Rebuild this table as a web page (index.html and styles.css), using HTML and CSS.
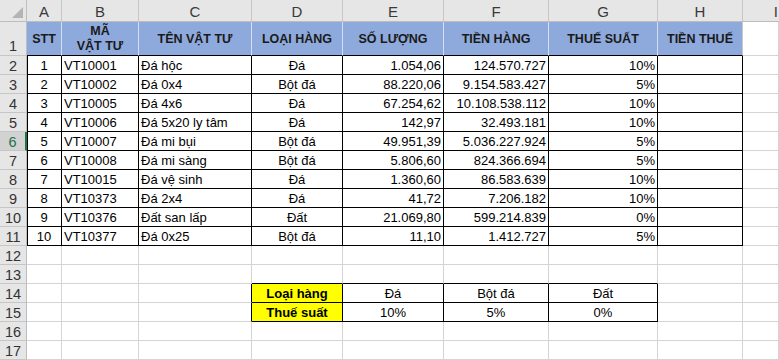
FILE: index.html
```html
<!DOCTYPE html>
<html lang="vi">
<head>
<meta charset="utf-8">
<title>Bảng vật tư</title>
<link rel="stylesheet" href="styles.css">
</head>
<body>
<div class="sheet">
  <!-- column headers -->
  <div class="corner"><span class="tri"></span></div>
  <div class="ch">A</div><div class="ch">B</div><div class="ch">C</div><div class="ch">D</div>
  <div class="ch">E</div><div class="ch">F</div><div class="ch">G</div><div class="ch">H</div><div class="ch edge">I</div>

  <!-- row 1 -->
  <div class="rh rh1">1</div>
  <div class="c hd">STT</div>
  <div class="c hd two">MÃ<br>VẬT TƯ</div>
  <div class="c hd">TÊN VẬT TƯ</div>
  <div class="c hd">LOẠI HÀNG</div>
  <div class="c hd">SỐ LƯỢNG</div>
  <div class="c hd">TIỀN HÀNG</div>
  <div class="c hd">THUẾ SUẤT</div>
  <div class="c hd last">TIỀN THUẾ</div>
  <div class="c"></div>

  <div class="rh">2</div>
  <div class="c d ctr first">1</div><div class="c d">VT10001</div><div class="c d">Đá hộc</div><div class="c d ctr">Đá</div><div class="c d r">1.054,06</div><div class="c d r">124.570.727</div><div class="c d r">10%</div><div class="c d"></div><div class="c"></div>

  <div class="rh">3</div>
  <div class="c d ctr first">2</div><div class="c d">VT10002</div><div class="c d">Đá 0x4</div><div class="c d ctr">Bột đá</div><div class="c d r">88.220,06</div><div class="c d r">9.154.583.427</div><div class="c d r">5%</div><div class="c d"></div><div class="c"></div>

  <div class="rh">4</div>
  <div class="c d ctr first">3</div><div class="c d">VT10005</div><div class="c d">Đá 4x6</div><div class="c d ctr">Đá</div><div class="c d r">67.254,62</div><div class="c d r">10.108.538.112</div><div class="c d r">10%</div><div class="c d"></div><div class="c"></div>

  <div class="rh">5</div>
  <div class="c d ctr first">4</div><div class="c d">VT10006</div><div class="c d">Đá 5x20 ly tâm</div><div class="c d ctr">Đá</div><div class="c d r">142,97</div><div class="c d r">32.493.181</div><div class="c d r">10%</div><div class="c d"></div><div class="c"></div>

  <div class="rh sel">6</div>
  <div class="c d ctr first">5</div><div class="c d">VT10007</div><div class="c d">Đá mi bụi</div><div class="c d ctr">Bột đá</div><div class="c d r">49.951,39</div><div class="c d r">5.036.227.924</div><div class="c d r">5%</div><div class="c d"></div><div class="c"></div>

  <div class="rh">7</div>
  <div class="c d ctr first">6</div><div class="c d">VT10008</div><div class="c d">Đá mi sàng</div><div class="c d ctr">Bột đá</div><div class="c d r">5.806,60</div><div class="c d r">824.366.694</div><div class="c d r">5%</div><div class="c d"></div><div class="c"></div>

  <div class="rh">8</div>
  <div class="c d ctr first">7</div><div class="c d">VT10015</div><div class="c d">Đá vệ sinh</div><div class="c d ctr">Đá</div><div class="c d r">1.360,60</div><div class="c d r">86.583.639</div><div class="c d r">10%</div><div class="c d"></div><div class="c"></div>

  <div class="rh">9</div>
  <div class="c d ctr first">8</div><div class="c d">VT10373</div><div class="c d">Đá 2x4</div><div class="c d ctr">Đá</div><div class="c d r">41,72</div><div class="c d r">7.206.182</div><div class="c d r">10%</div><div class="c d"></div><div class="c"></div>

  <div class="rh">10</div>
  <div class="c d ctr first">9</div><div class="c d">VT10376</div><div class="c d">Đất san lấp</div><div class="c d ctr">Đất</div><div class="c d r">21.069,80</div><div class="c d r">599.214.839</div><div class="c d r">0%</div><div class="c d"></div><div class="c"></div>

  <div class="rh">11</div>
  <div class="c d ctr first">10</div><div class="c d">VT10377</div><div class="c d">Đá 0x25</div><div class="c d ctr">Bột đá</div><div class="c d r">11,10</div><div class="c d r">1.412.727</div><div class="c d r">5%</div><div class="c d"></div><div class="c"></div>

  <div class="rh">12</div>
  <div class="c"></div><div class="c"></div><div class="c"></div><div class="c"></div><div class="c"></div><div class="c"></div><div class="c"></div><div class="c"></div><div class="c"></div>

  <div class="rh">13</div>
  <div class="c"></div><div class="c"></div><div class="c"></div><div class="c bb"></div><div class="c bb"></div><div class="c bb"></div><div class="c bb"></div><div class="c"></div><div class="c"></div>

  <div class="rh">14</div>
  <div class="c"></div><div class="c"></div><div class="c br"></div><div class="c y">Loại hàng</div><div class="c bx ctr">Đá</div><div class="c bx ctr">Bột đá</div><div class="c bx ctr">Đất</div><div class="c"></div><div class="c"></div>

  <div class="rh">15</div>
  <div class="c"></div><div class="c"></div><div class="c br"></div><div class="c y">Thuế suất</div><div class="c bx ctr">10%</div><div class="c bx ctr">5%</div><div class="c bx ctr">0%</div><div class="c"></div><div class="c"></div>

  <div class="rh">16</div>
  <div class="c"></div><div class="c"></div><div class="c"></div><div class="c"></div><div class="c"></div><div class="c"></div><div class="c"></div><div class="c"></div><div class="c"></div>

  <div class="rh">17</div>
  <div class="c"></div><div class="c"></div><div class="c"></div><div class="c"></div><div class="c"></div><div class="c"></div><div class="c"></div><div class="c"></div><div class="c"></div>
</div>
</body>
</html>
```

FILE: styles.css
```css
html, body {
  margin: 0;
  padding: 0;
  background: #ffffff;
  overflow: hidden;
}

.sheet {
  display: grid;
  grid-template-columns: 27px 35px 77px 113px 91px 101px 105px 109px 85px 36px;
  grid-template-rows: 22px 34px repeat(16, 19px);
  width: 779px;
  font-family: "Liberation Sans", Arial, sans-serif;
  font-size: 13px;
  color: #000;
}

.corner {
  position: relative;
  background: #e6e6e6;
  border-right: 1px solid #bdbdbd;
  border-bottom: 1px solid #bdbdbd;
  box-sizing: border-box;
}

.tri {
  position: absolute;
  right: 3px;
  bottom: 3px;
  width: 0;
  height: 0;
  border-left: 11px solid transparent;
  border-bottom: 11px solid #b4b4b4;
}

.ch {
  box-sizing: border-box;
  background: #e6e6e6;
  border-right: 1px solid #c6c6c6;
  border-bottom: 1px solid #bdbdbd;
  display: flex;
  align-items: center;
  justify-content: center;
  font-family: "Liberation Sans", Arial, sans-serif;
  font-size: 15px;
  color: #3a3a3a;
  padding-top: 1px;
}

.ch.edge {
  justify-content: flex-end;
  border-right: none;
  padding-right: 1px;
}

.rh {
  box-sizing: border-box;
  background: #e6e6e6;
  border-right: 1px solid #bdbdbd;
  border-bottom: 1px solid #c6c6c6;
  display: flex;
  align-items: center;
  justify-content: center;
  font-family: "Liberation Sans", Arial, sans-serif;
  font-size: 14.5px;
  color: #333333;
  padding-top: 1px;
}

.rh1 {
  align-items: flex-end;
  padding-bottom: 1px;
}

.rh.sel {
  background: #d2d2d2;
  color: #217346;
  border-right: 2px solid #217346;
}

.c {
  box-sizing: border-box;
  border-right: 1px solid #d4d4d4;
  border-bottom: 1px solid #d4d4d4;
  display: flex;
  align-items: center;
  padding: 1px 2px 0 2px;
  white-space: nowrap;
  overflow: hidden;
}

.hd {
  background: #8ea9db;
  border-right: 1px solid #d5def0;
  border-bottom: 1px solid #000;
  justify-content: center;
  text-align: center;
  font-weight: bold;
  font-size: 12.5px;
  color: #1a1a1a;
  line-height: 15px;
}

.hd.last {
  border-right: 1px solid #c9c9c9;
}

.d {
  border-right: 1px solid #000;
  border-bottom: 1px solid #000;
}

.d.first {
  box-shadow: inset 1px 0 0 #000;
}

.ctr {
  justify-content: center;
}

.r {
  justify-content: flex-end;
}

.bb {
  border-bottom: 1px solid #000;
}

.br {
  border-right: 1px solid #000;
}

.y {
  background: #ffff00;
  border-right: 1px solid #000;
  border-bottom: 1px solid #000;
  justify-content: center;
  font-weight: bold;
  font-size: 13px;
}

.bx {
  border-right: 1px solid #000;
  border-bottom: 1px solid #000;
}
```
